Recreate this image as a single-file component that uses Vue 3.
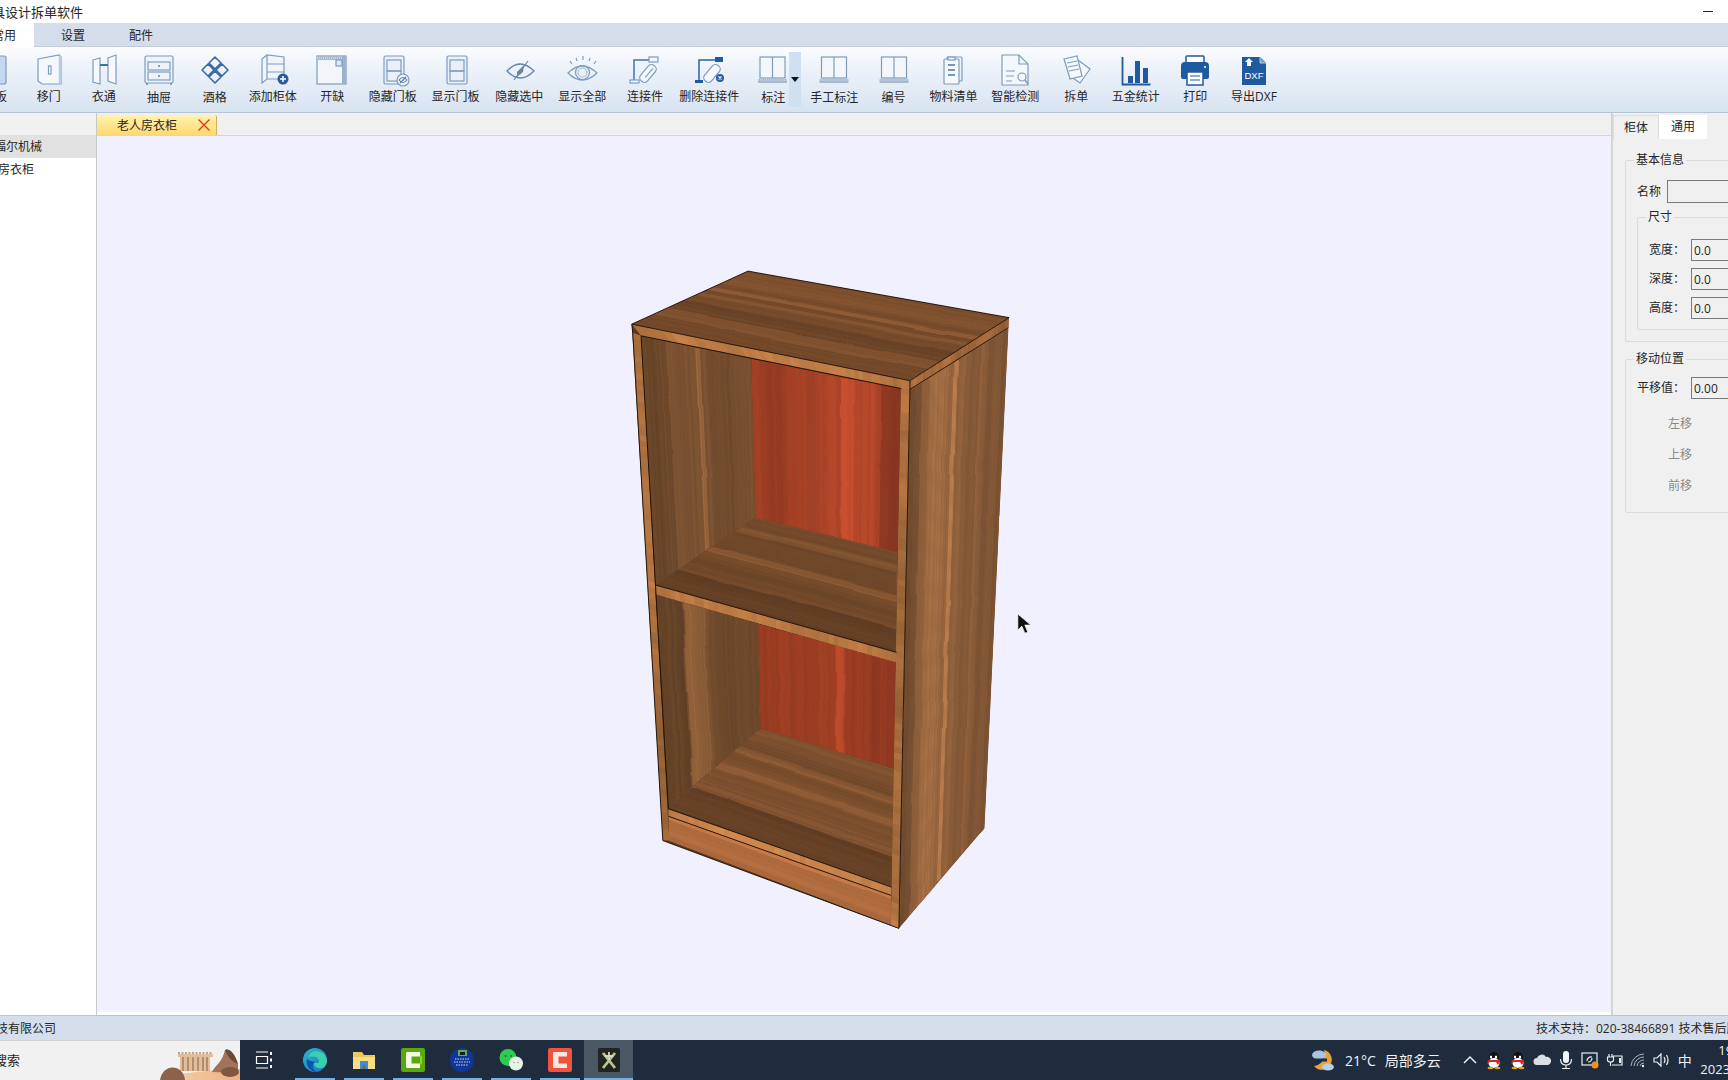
<template>
  <div class="app">
    <div class="titlebar">
      <span class="title">家具设计拆单软件</span>
      <span class="min"></span>
    </div>

    <div class="menu">
      <span class="menu-tab active">常用</span>
      <span class="menu-tab">设置</span>
      <span class="menu-tab">配件</span>
    </div>

    <div class="ribbon">
      <div
        v-for="item in tools"
        :key="item.label"
        class="tool"
        :style="{ width: item.w + 'px' }"
      >
        <span v-if="item.drop" class="drop"><i></i></span>
        <svg
          class="tool-icon"
          viewBox="0 0 40 36"
          fill="none"
          stroke="#7d9cc0"
          stroke-width="1.2"
          v-html="item.icon"
        ></svg>
        <span :class="['tool-label', { low: item.low }]">{{ item.label }}</span>
      </div>
    </div>

    <div class="main">
      <aside class="tree">
        <div class="tree-head"></div>
        <div class="tree-row selected">福尔机械</div>
        <div class="tree-row second">老人房衣柜</div>
      </aside>

      <section class="work">
        <div class="doc-tabs">
          <div class="doc-tab">
            <span>老人房衣柜</span>
            <svg class="close" viewBox="0 0 12 12" fill="none" stroke="#e2371c" stroke-width="1.4">
              <path d="M0.5 0.5 11.5 11.5M11.5 0.5 0.5 11.5" />
            </svg>
          </div>
        </div>
        <div class="canvas">
          <svg class="scene" viewBox="97 136 1511 874" preserveAspectRatio="none">
            <defs>
              <filter id="wavy" x="-5%" y="-5%" width="110%" height="110%">
                <feTurbulence type="fractalNoise" baseFrequency="0.008 0.022" numOctaves="2" seed="7" />
                <feDisplacementMap in="SourceGraphic" scale="4" xChannelSelector="R" yChannelSelector="G" />
              </filter>
              <clipPath v-for="(f, i) in faces" :id="'face' + i" :key="i">
                <polygon :points="f.points" />
              </clipPath>
            </defs>
            <polygon :points="backing" fill="#5b3a20" />
            <g v-for="(f, i) in faces" :key="i" :clip-path="'url(#face' + i + ')'">
              <polygon :points="f.points" :fill="f.base" />
              <g :filter="f.crisp ? null : 'url(#wavy)'">
                <polygon v-for="(s, j) in f.stripes" :key="j" :points="s.points" :fill="s.fill" />
              </g>
            </g>
            <polyline
              v-for="(l, i) in edges"
              :key="'e' + i"
              :points="l"
              fill="none"
              stroke="#1b0f08"
              stroke-width="0.9"
            />
            <path
              d="M1016 613V629L1020 625 1023 632 1026 631 1023 624H1029Z"
              fill="#111"
              stroke="#fff"
              stroke-width="0.7"
            />
          </svg>
        </div>
      </section>

      <aside class="props">
        <div class="prop-tabs">
          <span class="prop-tab">柜体</span>
          <span class="prop-tab active">通用</span>
        </div>

        <fieldset class="group first">
          <legend>基本信息</legend>
          <div class="row name-row">
            <label>名称</label>
            <input class="field name" type="text" readonly />
          </div>
          <fieldset class="group inner">
            <legend>尺寸</legend>
            <div v-for="d in sizes" :key="d" class="row size-row">
              <label>{{ d }}：</label>
              <input class="field" type="text" value="0.0" readonly />
            </div>
          </fieldset>
        </fieldset>

        <fieldset class="group second">
          <legend>移动位置</legend>
          <div class="row move-row">
            <label>平移值：</label>
            <input class="field" type="text" value="0.00" readonly />
          </div>
          <div v-for="m in moves" :key="m" class="move">{{ m }}</div>
        </fieldset>
      </aside>
    </div>

    <div class="status">
      <span class="company">科技有限公司</span>
      <span class="support">技术支持：020-38466891 技术售后服务热线</span>
    </div>

    <div class="taskbar">
      <div class="search">
        <span class="search-text">搜索</span>
        <svg class="search-art" viewBox="0 0 90 40">
          <defs>
            <linearGradient id="sand" x1="0" y1="0" x2="1" y2="0">
              <stop offset="0" stop-color="#f2d3b4" />
              <stop offset="1" stop-color="#eeb27c" />
            </linearGradient>
          </defs>
          <path d="M10 40C24 33 50 31 90 29V40Z" fill="url(#sand)" />
          <path d="M28 14H63V17H60V31H30V17H28Z" fill="#e2bd9c" />
          <path d="M33 17V31M38 17V31M43 17V31M48 17V31M53 17V31M57 17V31" stroke="#a07a5c" stroke-width="1.4" />
          <path d="M28 13H63" stroke="#b08a6b" stroke-width="1.6" stroke-dasharray="2 1.5" />
          <path d="M62 32C66 24 72 23 75 10 78 8 84 11 88 24V33Z" fill="#a0735a" />
          <path d="M75 10C78 8 84 11 88 24 83 22 78 18 75 10Z" fill="#6d4835" />
          <ellipse cx="80" cy="32" rx="9" ry="5" fill="#7f5640" />
          <path d="M10 40C12 29 20 26 26 28 33 30 35 37 35 40Z" fill="#8c624a" />
        </svg>
      </div>

      <div class="taskview">
        <svg viewBox="0 0 18 18" fill="none" stroke="#fff" stroke-width="1.2">
          <path d="M1 1H13M1 17H13M1.500 5.500H12.500V12.500H1.500Z" />
          <path d="M16 1V4M16 7.500V10.500M16 14V17" stroke-width="2" />
        </svg>
      </div>

      <div
        v-for="(app, i) in apps"
        :key="i"
        :class="['app-slot', { current: i === apps.length - 1 }]"
      >
        <svg viewBox="0 0 24 24" class="app-icon" v-html="app"></svg>
      </div>

      <div class="tray">
        <svg class="weather" viewBox="0 0 26 26">
          <path d="M14 3A10 10 0 1 1 4 19 12 12 0 0 0 14 3Z" fill="#e7a43c" />
          <ellipse cx="9" cy="8" rx="7" ry="4.500" fill="#aac3e0" />
          <path d="M2 13H17" stroke="#1f2d3d" stroke-width="3" />
          <ellipse cx="18" cy="20" rx="6" ry="3.500" fill="#b9cfe8" />
        </svg>
        <span class="temp">21°C</span>
        <span class="cond">局部多云</span>
        <div class="tray-icons">
          <svg v-for="(t, i) in trayIcons" :key="i" viewBox="0 0 20 20" fill="none" stroke="#e8edf3" stroke-width="1.2" v-html="t"></svg>
          <span class="ime">中</span>
        </div>
        <div class="clock">
          <span>19:42</span>
          <span>2023/10/21</span>
        </div>
      </div>
    </div>
  </div>
</template>

<script setup>
const D = '#1f5a9f';

const ruler = (x) => `<rect x="${x}" y="5" width="25" height="21" stroke="#7d9bbd" fill="#f3f7fc"/><path d="M${x + 12.5} 5V26" stroke="#7d9bbd"/><rect x="${x - 2}" y="27" width="29" height="4" fill="#a9bad0" stroke="none"/><path d="M${x - 2} 28H${x + 27}" stroke="#dce4ef" stroke-dasharray="1 1"/>`;

const door = `<rect x="11" y="4" width="20" height="28" rx="1.500" fill="#e9f0f9"/><rect x="14" y="8" width="14" height="11"/><rect x="14" y="19" width="14" height="10"/>`;

const tools = [
  { label: '门板', w: 53, icon: `<rect x="7" y="4" width="24" height="28" rx="2" fill="#c5d8ef"/>` },
  { label: '移门', w: 54.5, icon: `<path d="M9 7 30 3 32 5V32H13L9 29Z" fill="#f4f8fd"/><path d="M31 4V32" stroke="#b9cde6" stroke-width="2.500"/><rect x="19.500" y="14" width="2.500" height="8" fill="#fff"/>` },
  { label: '衣通', w: 55.5, icon: `<path d="M9 8 16 6V32L9 30ZM24 6 32 3V32L24 29Z" fill="#f5f8fc"/><path d="M16 13H24" stroke="#3d70a8" stroke-width="2"/>` },
  { label: '抽屉', w: 55, low: 1, icon: `<rect x="6" y="4" width="28" height="27" rx="1.500" fill="#eef3fa"/><rect x="9" y="10" width="22" height="8"/><rect x="9" y="20" width="22" height="8"/><path d="M20 13V15M20 23V25M8 31V33M32 31V33" stroke="#4f76a6" stroke-width="1.300"/>` },
  { label: '酒格', w: 56.5, low: 1, icon: `<g stroke="#3c6aa3" stroke-width="1.600" stroke-linejoin="round"><path d="M20 5 26 11 20 17 14 11ZM13 12 19 18 13 24 7 18ZM27 12 33 18 27 24 21 18ZM20 19 26 25 20 31 14 25Z"/></g>` },
  { label: '添加柜体', w: 59.5, icon: `<path d="M9 7 14 3 31 5V27H14L9 31Z" fill="#f1f5fa"/><path d="M14 3V27M14 12H31M14 20H31" /><circle cx="30" cy="27" r="5.500" fill="#2a5c9e" stroke="none"/><path d="M30 24V30M27 27H33" stroke="#fff" stroke-width="1.500"/>` },
  { label: '开缺', w: 59.5, icon: `<rect x="5" y="4" width="29" height="28" fill="#f2f6fb"/><rect x="5" y="4" width="29" height="4" fill="#a9bacf" stroke="none"/><path d="M5 6H34" stroke="#e6ecf4" stroke-dasharray="1 1"/><rect x="30" y="4" width="4" height="28" fill="#9bb3d1" stroke="none"/><rect x="24" y="8" width="6" height="6" fill="#dfe8f3"/>` },
  { label: '隐藏门板', w: 61.5, icon: `${door}<circle cx="30" cy="28" r="6" fill="#f2f6fb"/><path d="M26 28Q30 23 34 28 30 33 26 28ZM27 31 33 25" stroke="#5c7ea8"/>` },
  { label: '显示门板', w: 64, icon: door },
  { label: '隐藏选中', w: 63.500, icon: `<path d="M8 19Q21 5 35 19 21 33 8 19Z" stroke="#6585aa" stroke-width="1.300"/><path d="M15 28 29 9" stroke="#6585aa"/><path d="M18 20 25 13 24 20 18 25Z" fill="#6585aa" stroke="none"/>` },
  { label: '显示全部', w: 62.500, icon: `<path d="M6 21Q20 7 35 21 20 35 6 21Z"/><circle cx="20.500" cy="20.500" r="7"/><circle cx="20.500" cy="20.500" r="4.500" stroke="#a8bdd6"/><path d="M10 12 8 9M15 9 14 6M21 8V4M27 9 28 6M32 12 34 9" />` },
  { label: '连接件', w: 63, icon: `<path d="M9 28V8H24" stroke="#3f74b2" stroke-width="1.500"/><rect x="24" y="5" width="9" height="5" fill="#f4f7fb"/><rect x="5" y="28" width="9" height="3" fill="#f4f7fb"/><rect x="19" y="12" width="9" height="20" rx="4" transform="rotate(40 24 21)" fill="#f4f7fb"/><path d="M24 15V27" transform="rotate(40 24 21)"/>` },
  { label: '删除连接件', w: 65.500, icon: `<path d="M10 28V8H27" stroke="#2e629f" stroke-width="1.500"/><rect x="26" y="5" width="8" height="5" fill="#1f5a9f" stroke="none"/><rect x="6" y="28" width="8" height="3" fill="#1f5a9f" stroke="none"/><rect x="19" y="12" width="9" height="20" rx="4" transform="rotate(40 24 21)" fill="#f4f7fb"/><circle cx="31" cy="26" r="4" fill="#2a5c9e" stroke="none"/><path d="M29.500 24.500 32.500 27.500M32.500 24.500 29.500 27.500" stroke="#fff"/>` },
  { label: '标注', w: 62.500, low: 1, drop: 1, icon: ruler(7) },
  { label: '手工标注', w: 59.500, low: 1, icon: ruler(7.500) },
  { label: '编号', w: 59, low: 1, icon: ruler(7.500) },
  { label: '物料清单', w: 61, icon: `<rect x="13" y="5" width="15" height="24" rx="1" /><rect x="10" y="7" width="15" height="25" rx="1" fill="#f5f8fc"/><path d="M14 13H21M14 18H21M14 23H21" stroke="#4f76a6" stroke-width="1.300"/><rect x="14" y="5" width="7" height="3" fill="#f5f8fc"/>` },
  { label: '智能检测', w: 62.500, icon: `<path d="M7 3H24L33 12V33H7Z" fill="#f4f7fb"/><path d="M24 3V12H33"/><path d="M11 19H20M11 24H19M11 29H17" /><circle cx="27" cy="25" r="4"/><path d="M30 28 33 32" stroke-width="1.500"/>` },
  { label: '拆单', w: 59.500, icon: `<path d="M22 8 34 17 24 31 14 24Z" fill="#f4f7fb"/><path d="M8 7 21 4 26 24 14 27Z" fill="#f4f7fb"/><path d="M11 11 21 9M12 15 22 13M13 19 23 17" stroke="#86a0c0"/>` },
  { label: '五金统计', w: 59.500, icon: `<path d="M6.500 5V32.500H34.500" stroke="${D}" stroke-width="1.800"/><rect x="12" y="24" width="5" height="7" fill="${D}" stroke="none"/><rect x="19" y="9" width="5" height="22" fill="${D}" stroke="none"/><rect x="27" y="16" width="5" height="15" fill="${D}" stroke="none"/>` },
  { label: '打印', w: 59.500, icon: `<rect x="11" y="4" width="18" height="9" rx="1" fill="#fff" stroke="${D}" stroke-width="1.500"/><path d="M6 14Q6 10 10 10H30Q34 10 34 14V25Q34 27 32 27H8Q6 27 6 25Z" fill="${D}" stroke="none"/><rect x="12" y="20" width="16" height="13" fill="#fff" stroke="${D}" stroke-width="1.500"/><path d="M15 24H25M15 28H25" stroke="${D}"/><circle cx="30" cy="15" r="1" fill="#fff" stroke="none"/>` },
  { label: '导出DXF', w: 58, icon: `<path d="M8 5H26L32 11V33H8Z" fill="${D}" stroke="none"/><path d="M26 5V11H32" stroke="#cfe0f2" fill="#6f9bd0" stroke-width="0.800"/><path d="M15 6 19 10H17V14H13V10H11Z" fill="#fff" stroke="none"/><text x="20" y="27" text-anchor="middle" font-size="9.500" font-family="Liberation Sans, sans-serif" fill="#fff" stroke="none">DXF</text>` },
];

const sizes = ['宽度', '深度', '高度'];
const moves = ['左移', '上移', '前移'];

const penguin = `<g stroke="none"><ellipse cx="10" cy="8" rx="5" ry="6" fill="#111"/><ellipse cx="10" cy="13" rx="5.500" ry="5" fill="#fff"/><ellipse cx="7" cy="7" rx="1.200" ry="1.600" fill="#fff"/><ellipse cx="12" cy="7" rx="1.200" ry="1.600" fill="#fff"/><path d="M4 10H16L15 13 14 15 12 12H6Q4 13 3 14Z" fill="#d02a20"/><ellipse cx="6.500" cy="18" rx="3" ry="1.200" fill="#e8a020"/><ellipse cx="13.500" cy="18" rx="3" ry="1.200" fill="#e8a020"/></g>`;

const trayIcons = [
  `<path d="M4 13 10 7 16 13" stroke-width="1.500"/>`,
  penguin,
  penguin,
  `<path d="M5 15A3.500 3.500 0 0 1 5 8 5 5 0 0 1 14 7 4 4 0 0 1 16 15Z" fill="#d8dee6" stroke="none"/>`,
  `<rect x="7" y="1" width="6" height="12" rx="3" fill="#f3f5f8" stroke="none"/><path d="M4.500 9Q4.500 15 10 15 15.500 15 15.500 9M10 15V18M6 18.500H14"/>`,
  `<rect x="2" y="3" width="15" height="12"/><path d="M7 11A4 4 0 0 1 12 7M12 8A4 4 0 0 1 8 12"/><circle cx="15" cy="15" r="3.500" fill="#f0921e" stroke="none"/>`,
  `<path d="M5 4V7M8 4V7M3.500 7H9.500V10Q9.500 12 6.500 12 3.500 12 3.500 10ZM6.500 12V16M9 6H18V15H8"/><rect x="15" y="8" width="2" height="5" fill="#e8edf3" stroke="none"/>`,
  `<path d="M3 16A13 13 0 0 1 16 4M6 16A10 10 0 0 1 16 7M9 16A7 7 0 0 1 16 10M12 16A4 4 0 0 1 16 13" stroke-width="1" stroke="#aab4c0"/><circle cx="15" cy="16" r="1.200" fill="#e8edf3" stroke="none"/>`,
  `<path d="M2 8H5L9 4V16L5 12H2Z"/><path d="M12 7Q14 10 12 13M14.500 5Q17.500 10 14.500 15"/>`,
];

const apps = [
  `<defs><linearGradient id="eg" x1="0" y1="0" x2="1" y2="1"><stop offset="0" stop-color="#2fb6c8"/><stop offset="1" stop-color="#1670cc"/></linearGradient></defs><circle cx="12" cy="12" r="12" fill="url(#eg)"/><path d="M24 13C24 7 19 3 13 3 9 3 6 6 5 10 8 8 13 8 15 11 17 14 16 15 13 15H11C11 19 15 21 19 20 22 19 24 16 24 13Z" fill="#3bd0a8"/><path d="M4 11C2 18 8 24 14 24 10 22 8 17 12 14 9 13 6 13 4 11Z" fill="#0b56ac"/>`,
  `<path d="M1 4H10L12 7H23V21H1Z" fill="#f2c55c"/><path d="M1 9H23V21H1Z" fill="#f8dd84"/><rect x="8" y="13" width="8" height="8" fill="#3c8fd6"/><rect x="10.500" y="17" width="3" height="4" fill="#7b6b4a"/>`,
  `<rect x="0" y="0" width="24" height="24" rx="2" fill="#5ba80e"/><path d="M5 5Q5 4 6 4H19V8.500H10.500V15.500H19V20H6Q5 20 5 19Z" fill="#f3fbe8"/><path d="M19 8.500 21 7V17L19 15.500Z" fill="#8cd23a"/>`,
  `<circle cx="12" cy="12" r="12" fill="#10369a"/><path d="M8 2H17V8H8Z" fill="#6ea650"/><path d="M10 4H15V7H10Z" fill="#10232d"/><path d="M5 11H19M4 14H20M6 17H18" stroke="#cfdcf5" stroke-width="1.200" stroke-dasharray="1.500 1"/>`,
  `<circle cx="9" cy="9.500" r="8.500" fill="#2ccb52"/><circle cx="17" cy="15.500" r="7" fill="#e9f2e9"/><circle cx="6.500" cy="8" r="1" fill="#167a33"/><circle cx="12" cy="8" r="1" fill="#167a33"/><circle cx="15" cy="14.500" r=".8" fill="#9aa"/><circle cx="19" cy="14.500" r=".8" fill="#9aa"/>`,
  `<rect x="0" y="0" width="24" height="24" rx="2" fill="#f0523c"/><path d="M5 5Q5 4 6 4H19V8.500H10.500V15.500H19V20H6Q5 20 5 19Z" fill="#fde6df"/>`,
  `<rect x="1" y="0" width="22" height="24" rx="1.500" fill="#232323"/><path d="M6 5 18 20M18 5 6 20" stroke="#b7c98a" stroke-width="2.800"/><path d="M12 4V12M8 8H16" stroke="#d8d8c8" stroke-width="1.800"/>`,
];

// cabinet faces, measured from the reference
const pt = ([x, y]) => [610 + x / 3, 250 + y * 0.4337];
const mix = (a, b, t) => [a[0] + (b[0] - a[0]) * t, a[1] + (b[1] - a[1]) * t];
const str = (list) => list.map((p) => p[0].toFixed(1) + ',' + p[1].toFixed(1)).join(' ');

let seed = 4711;
const rnd = () => {
  seed = (seed * 16807) % 2147483647;
  return seed / 2147483647;
};

const tint = (rgb, k) => {
  const c = rgb.map((v) => Math.max(0, Math.min(255, Math.round(v * k))));
  return `rgb(${c[0]},${c[1]},${c[2]})`;
};

// grain runs along a->d; stripes are laid out across a->b
const face = (quad, rgb, n, spread, bands = [], crisp = false) => {
  const [a, b, c, d] = quad.map(pt);
  const stripes = [];
  let walk = 1;
  for (let i = 0; i < n; i++) {
    const u0 = i / n;
    const u1 = (i + 1.3) / n;
    walk += (rnd() - 0.5) * spread * 0.5;
    walk = Math.max(1 - spread * 0.8, Math.min(1 + spread * 0.8, walk));
    let k = walk * (1 + (rnd() - 0.5) * spread * 0.5);
    for (const [from, to, f] of bands) {
      if (u0 >= from && u0 < to) k *= f;
    }
    stripes.push({
      points: str([mix(a, b, u0), mix(a, b, u1), mix(d, c, u1), mix(d, c, u0)]),
      fill: tint(rgb, k),
    });
  }
  return { points: str([a, b, c, d]), base: tint(rgb, 1), stripes, crisp };
};

const walnut = [126, 84, 50];
const red = [162, 64, 38];
const edge = [172, 112, 62];

const backing = str([[62, 170], [895, 300], [862, 1560], [155, 1358]].map(pt));

const faces = [
  face([[895, 320], [1190, 178], [1118, 1330], [862, 1560]], [134, 90, 56], 90, 0.14, [[0, 0.12, 0.84], [0.2, 0.38, 1.1], [0.44, 0.48, 1.24], [0.62, 0.72, 0.9]]),
  face([[410, 48], [62, 170], [895, 300], [1192, 155]], [120, 76, 44], 80, 0.14, [[0.3, 0.35, 1.22], [0.4, 0.44, 1.14], [0.54, 0.7, 0.84], [0.82, 1, 0.88]]),
  face([[90, 197], [420, 250], [432, 615], [132, 770]], walnut, 70, 0.14, [[0, 0.22, 0.84], [0.3, 0.42, 0.98], [0.5, 0.54, 1.24], [0.58, 0.8, 0.94]]),
  face([[420, 250], [868, 318], [858, 695], [432, 615]], red, 70, 0.12, [[0.2, 0.36, 1.05], [0.6, 0.68, 1.14], [0.68, 0.82, 1.07], [0.86, 1, 0.84]]),
  face([[432, 615], [132, 770], [855, 925], [858, 695]], [124, 80, 46], 70, 0.14, [[0.12, 0.2, 1.1], [0.42, 0.5, 1.18], [0.76, 1, 0.8]]),
  face([[135, 790], [440, 860], [448, 1100], [172, 1280]], walnut, 60, 0.14, [[0, 0.24, 0.8], [0.26, 0.46, 1.16], [0.5, 1, 0.96]]),
  face([[440, 860], [852, 945], [848, 1193], [448, 1100]], [158, 62, 36], 64, 0.12, [[0.56, 0.62, 1.16], [0.82, 1, 0.9]]),
  face([[448, 1100], [172, 1280], [840, 1465], [848, 1193]], [128, 82, 48], 70, 0.14, [[0.24, 0.3, 1.12], [0.42, 0.5, 1.16], [0.74, 1, 0.74]]),
  face([[62, 170], [895, 300], [895, 322], [90, 197]], edge, 64, 0.16, [], true),
  face([[132, 770], [855, 925], [853, 948], [135, 792]], edge, 50, 0.14, [], true),
  face([[172, 1285], [840, 1465], [838, 1484], [172, 1302]], [186, 122, 70], 44, 0.14, [], true),
  face([[172, 1302], [172, 1358], [838, 1552], [838, 1484]], [172, 106, 62], 20, 0.08, [[0, 0.15, 1.14], [0.8, 1, 0.94]]),
  face([[65, 190], [155, 1358], [174, 1358], [90, 197]], edge, 90, 0.16, [], true),
  face([[868, 318], [838, 1552], [862, 1560], [895, 320]], edge, 90, 0.16, [], true),
  face([[895, 300], [1192, 155], [1190, 178], [895, 322]], [160, 102, 58], 46, 0.16, [], true),
];

const edges = [
  [[62, 170], [410, 48], [1192, 155], [895, 300], [62, 170]],
  [[895, 320], [1190, 178]],
  [[895, 300], [895, 320], [862, 1560]],
  [[90, 197], [172, 1285]],
  [[62, 170], [65, 190], [155, 1358], [862, 1560]],
  [[172, 1285], [840, 1465]],
  [[172, 1302], [838, 1484]],
  [[90, 197], [868, 318]],
  [[132, 770], [855, 925]],
].map((l) => str(l.map(pt)));
</script>

<style scoped>
.app {
  width: 1728px;
  height: 1080px;
  display: flex;
  flex-direction: column;
  overflow: hidden;
  background: #fff;
  color: #262626;
  font-family: "Open Sans", "Noto Sans CJK SC", sans-serif;
  font-size: 12px;
}

.titlebar {
  height: 22px;
  margin-bottom: 1px;
  flex: none;
  display: flex;
  align-items: center;
  justify-content: space-between;
}

.title {
  margin-left: -21px;
  font-size: 13px;
  white-space: nowrap;
}

.min {
  width: 10px;
  height: 1px;
  margin-right: 15px;
  background: #222;
}

.menu {
  height: 24px;
  flex: none;
  display: flex;
  background: #d5dcea;
  border-bottom: 1px solid #c3cbd9;
  box-sizing: border-box;
}

.menu-tab {
  width: 68px;
  line-height: 25px;
  text-align: center;
}

.menu-tab.active {
  width: 70px;
  margin-left: -36px;
  height: 24px;
  box-sizing: border-box;
  text-align: left;
  padding-left: 28px;
  background: #fff;
}

.menu-tab:nth-child(2) {
  margin-left: 5px;
}

.ribbon {
  height: 66px;
  flex: none;
  box-sizing: border-box;
  padding-top: 5px;
  display: flex;
  background: linear-gradient(#fbfcfe, #eef3fa 30%, #d8e3f1);
  border-bottom: 1px solid #b5c3d4;
}

.tool {
  position: relative;
  flex: none;
  display: flex;
  flex-direction: column;
  align-items: center;
}

.tool:first-child {
  margin-left: -31.5px;
}

.tool-icon {
  width: 40px;
  height: 36px;
  flex: none;
  overflow: visible;
}

.tool-label {
  margin-top: 1px;
  line-height: 16px;
  white-space: nowrap;
}

.tool-label.low {
  margin-top: 2px;
}

.drop {
  position: absolute;
  top: 0;
  right: 4px;
  width: 12px;
  height: 55px;
  background: #cfe0f3;
}

.drop i {
  position: absolute;
  top: 25px;
  left: 2px;
  border: 4.5px solid transparent;
  border-top: 5px solid #111;
  border-bottom: 0;
}

.main {
  flex: 1;
  min-height: 0;
  display: flex;
  background: #f0f0f0;
}

.tree {
  width: 97px;
  flex: none;
  background: #fff;
  border-right: 1px solid #c8c8c8;
  box-sizing: border-box;
  overflow: hidden;
}

.tree-head {
  height: 22px;
  background: #f1f1f1;
}

.tree-row {
  height: 23px;
  line-height: 23px;
  white-space: nowrap;
}

.tree-row.selected {
  text-indent: -6px;
  background: #e1e1e1;
}

.tree-row.second {
  text-indent: -26px;
}

.work {
  width: 1515px;
  flex: none;
  display: flex;
  flex-direction: column;
  border-right: 1px solid #d0d0d0;
  box-sizing: border-box;
}

.doc-tabs {
  height: 23px;
  flex: none;
  background: #f0f0f0;
  border-bottom: 1px solid #d6d6d6;
  box-sizing: border-box;
  padding-top: 2px;
}

.doc-tab {
  width: 120px;
  height: 20px;
  box-sizing: border-box;
  display: flex;
  align-items: center;
  padding-left: 20px;
  background: linear-gradient(#fff3ad, #fdd971);
  border-right: 1px solid #d3ae5c;
  border-radius: 2px 2px 0 0;
}

.close {
  width: 12px;
  height: 12px;
  margin-left: 21px;
}

.canvas {
  flex: 1;
  min-height: 0;
  background: #f0f0fe;
  border-bottom: 3px solid #fff;
}

.scene {
  display: block;
  width: 100%;
  height: 100%;
}

.props {
  flex: 1;
  min-width: 0;
  overflow: hidden;
  border-left: 1px solid #d8d8d8;
  padding-top: 2px;
}

.prop-tabs {
  height: 24px;
  display: flex;
}

.prop-tab {
  width: 46px;
  line-height: 23px;
  text-align: center;
  box-sizing: border-box;
  border: 1px solid #dcdcdc;
  border-bottom: 0;
}

.prop-tab.active {
  width: 48px;
  background: #fff;
  border: 0;
}

.group {
  margin: 0;
  padding: 0;
  box-sizing: border-box;
  border: 1px solid #dcdcdc;
  border-radius: 2px;
}

.group legend {
  margin-left: -3px;
  padding: 0 2px;
  line-height: 18px;
  font-size: 12px;
}

.group.first {
  width: 190px;
  margin: 12px 0 0 12px;
  height: 191px;
  padding: 11px 0 0 11px;
}

.group.inner {
  width: 170px;
  height: 122px;
  margin-top: 5px;
  padding: 13px 0 0 11px;
}

.group.second {
  width: 190px;
  margin: 8px 0 0 12px;
  height: 163px;
  padding: 9px 0 0 11px;
}

.row {
  display: flex;
  align-items: center;
}

.name-row {
  gap: 6px;
}

.size-row {
  margin-bottom: 7px;
}

.row label {
  white-space: nowrap;
  position: relative;
  top: -1px;
}

.size-row label {
  width: 42px;
}

.move-row label {
  width: 54px;
}

.field {
  width: 70px;
  height: 22px;
  box-sizing: border-box;
  padding: 0 2px;
  border: 1px solid #7a7a7a;
  background: #f0f0f0;
  font: inherit;
  color: #262626;
  outline: none;
}

.field.name {
  height: 23px;
  width: 100px;
}

.move {
  margin: 0 0 0 31px;
  width: 24px;
  height: 31px;
  line-height: 31px;
  white-space: nowrap;
  color: #8a8a8a;
}

.move:nth-of-type(2) {
  margin-top: 9px;
}

.status {
  height: 25px;
  flex: none;
  display: flex;
  justify-content: space-between;
  align-items: center;
  background: #d5deeb;
  border-top: 1px solid #b9c3d0;
  box-sizing: border-box;
}

.company {
  margin-left: -16px;
  white-space: nowrap;
}

.support {
  width: 192px;
  overflow: hidden;
  white-space: nowrap;
  flex: none;
}

.taskbar {
  height: 40px;
  flex: none;
  display: flex;
  background: #1e2c3d;
  overflow: hidden;
}

.search {
  position: relative;
  width: 240px;
  flex: none;
  box-sizing: border-box;
  background: #f1f1f1;
  border-top: 1px solid #d4d4d4;
  line-height: 38px;
  font-size: 13px;
  overflow: hidden;
}

.search-text {
  margin-left: -6px;
}

.search-art {
  position: absolute;
  right: 0;
  bottom: 0;
  width: 90px;
  height: 40px;
}

.taskview {
  width: 48px;
  margin-right: 2px;
  flex: none;
  display: flex;
  align-items: center;
  justify-content: center;
}

.taskview svg {
  width: 18px;
  height: 18px;
}

.app-slot {
  width: 49px;
  flex: none;
  box-sizing: border-box;
  display: flex;
  align-items: center;
  justify-content: center;
  position: relative;
}

.app-slot::after {
  content: "";
  position: absolute;
  left: 5px;
  right: 4px;
  bottom: 0;
  height: 2px;
  background: #76b0e2;
}

.app-slot.current {
  background: #4a5866;
}

.app-slot.current::after {
  left: 0;
  right: 0;
}

.app-icon {
  width: 24px;
  height: 24px;
}

.tray {
  margin-left: 677px;
  flex: none;
  display: flex;
  align-items: center;
  color: #f0f3f7;
}

.weather {
  width: 26px;
  height: 26px;
  margin-right: 9px;
}

.temp {
  font-size: 14px;
  margin-right: 9px;
}

.cond {
  font-size: 14px;
  width: 56px;
  white-space: nowrap;
  margin-right: 19px;
}

.tray-icons {
  display: flex;
  align-items: center;
  gap: 4px;
}

.tray-icons svg {
  width: 20px;
  height: 20px;
}

.ime {
  width: 20px;
  margin-left: -1px;
  text-align: center;
  font-size: 14px;
}

.clock {
  margin-left: 3px;
  width: 74px;
  flex: none;
  display: flex;
  flex-direction: column;
  align-items: center;
  font-size: 13px;
  line-height: 19px;
  white-space: nowrap;
}
</style>
